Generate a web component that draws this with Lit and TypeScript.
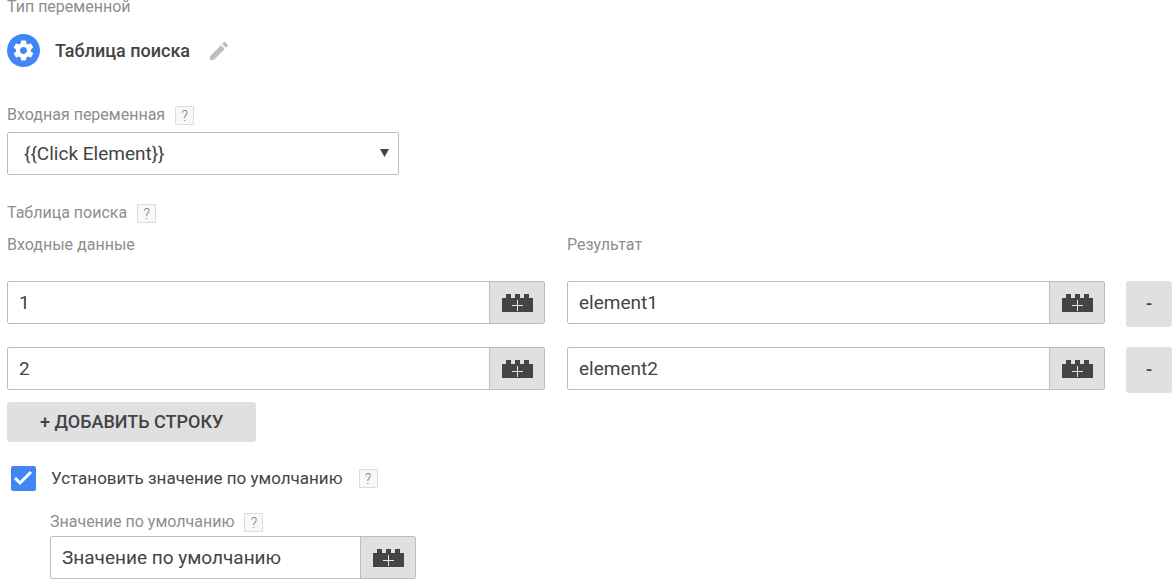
import { LitElement, html, css, svg } from "lit";
import { customElement, property, state } from "lit/decorators.js";

const brick = svg`
  <path fill="#444" d="M0 4h4V0h5v4h4V0h5v4h4V0h5v4h4v14H0z"/>
  <path fill="#e8e8e8" d="M10 11h5V6h1v5h5v1h-5v5h-1v-5h-5z"/>`;

@customElement("help-tip")
export class HelpTip extends LitElement {
  static styles = css`
    :host { display: inline-flex; }
    .tip {
      box-sizing: border-box;
      width: 19px;
      height: 19px;
      padding: 0;
      border: 1px solid #dcdcdc;
      border-radius: 1px;
      background: #f8f8f8;
      color: #777;
      font: 300 14px/18px Roboto, sans-serif;
      text-align: center;
    }
  `;
  render() {
    return html`<button class="tip" type="button" aria-label="Справка">?</button>`;
  }
}

@customElement("variable-input")
export class VariableInput extends LitElement {
  static styles = css`
    :host { display: block; min-width: 0; }
    .field {
      box-sizing: border-box;
      display: flex;
      height: 43px;
      border: 1px solid #bdbdbd;
      border-radius: 2px;
      overflow: hidden;
      background: #fff;
    }
    .text {
      flex: 1;
      min-width: 0;
      padding: 0 11px;
      border: 0;
      outline: 0;
      background: none;
      color: #444;
      font: 19px/24px Roboto, sans-serif;
    }
    .pick {
      display: flex;
      align-items: center;
      justify-content: center;
      width: 55px;
      padding: 0;
      border: 0;
      border-left: 1px solid #bdbdbd;
      background: #e0e0e0;
    }
  `;
  @property() value = "";
  @property() label = "";
  render() {
    return html`<div class="field">
      <input class="text" type="text" aria-label=${this.label} .value=${this.value} />
      <button class="pick" type="button" aria-label="Выбрать переменную">
        <svg width="31" height="18" viewBox="0 0 31 18">${brick}</svg>
      </button>
    </div>`;
  }
}

@customElement("app-root")
export class AppRoot extends LitElement {
  static styles = css`
    :host {
      display: block;
      background: #fff;
      color: #444;
      font-family: Roboto, sans-serif;
    }
    .form { padding: 0 4px 0 7px; }
    .caption {
      display: flex;
      align-items: center;
      gap: 10px;
      color: #8e8e8e;
      font-size: 16px;
      line-height: 20px;
    }
    .kind {
      display: flex;
      align-items: center;
      margin: 20px 0 38px;
    }
    .kind-name {
      margin: 0 20px 0 15px;
      font-size: 18px;
      line-height: 24px;
      font-weight: 500;
    }
    .top { line-height: 14px; }
    .edit { display: flex; padding: 0; border: 0; background: none; }
    .select-box {
      position: relative;
      width: 392px;
      max-width: 100%;
      margin: 7px 0 28px;
    }
    .select {
      display: block;
      box-sizing: border-box;
      width: 100%;
      height: 43px;
      padding: 0 32px 0 16px;
      border: 1px solid #bdbdbd;
      border-radius: 2px;
      appearance: none;
      background: #fff;
      color: #444;
      font: 19px/24px Roboto, sans-serif;
    }
    .arrow {
      position: absolute;
      right: 10px;
      top: 17px;
      pointer-events: none;
    }
    .row {
      display: grid;
      grid-template-columns: 1fr 46px;
      gap: 21px;
      align-items: start;
    }
    .pair {
      display: grid;
      grid-template-columns: 1fr 1fr;
      gap: 22px;
    }
    .heads { margin: 12px 0 26px; }
    .rows { display: grid; gap: 20px; }
    .remove, .add {
      border: 0;
      border-radius: 3px;
      background: #e0e0e0;
      color: #444;
      font: 500 18px/24px Roboto, sans-serif;
    }
    .remove { height: 46px; padding: 0; }
    .add { display: block; height: 40px; margin: 9px 0 23px; padding: 0 33px; }
    .default {
      display: flex;
      align-items: center;
      gap: 16px;
      padding-left: 4px;
    }
    .default-label {
      display: flex;
      align-items: center;
      gap: 15px;
      font-size: 17px;
      line-height: 26px;
    }
    .check { display: grid; }
    .box {
      grid-area: 1 / 1;
      width: 25px;
      height: 25px;
      margin: 0;
      appearance: none;
      border: 2px solid #757575;
      border-radius: 2px;
    }
    .box:checked { border: 0; background: #4285f4; }
    .tick { grid-area: 1 / 1; pointer-events: none; }
    .box:not(:checked) + .tick { visibility: hidden; }
    .fallback { padding: 21px 0 5px 43px; }
    .fallback-input { width: 366px; max-width: 100%; margin-top: 4px; }
  `;

  @state() private rows = [
    { input: "1", output: "element1" },
    { input: "2", output: "element2" },
  ];

  private add() {
    this.rows = [...this.rows, { input: "", output: "" }];
  }
  private remove(i: number) {
    this.rows = this.rows.filter((_, n) => n !== i);
  }

  render() {
    return html`<main class="form">
      <div class="caption top">Тип переменной</div>
      <div class="kind">
        <svg width="33" height="33" viewBox="0 0 33 33" aria-hidden="true">
          <circle cx="16.5" cy="16.5" r="16.5" fill="#4285f4" />
          <path transform="translate(4.5 4.5)" fill="#fff" d="M19.43 12.98c.04-.32.07-.64.07-.98s-.03-.66-.07-.98l2.11-1.65c.19-.15.24-.42.12-.64l-2-3.46c-.12-.22-.39-.3-.61-.22l-2.49 1c-.52-.4-1.08-.73-1.69-.98l-.38-2.65C14.46 2.18 14.25 2 14 2h-4c-.25 0-.46.18-.49.42l-.38 2.65c-.61.25-1.17.59-1.69.98l-2.49-1c-.23-.09-.49 0-.61.22l-2 3.46c-.13.22-.07.49.12.64l2.11 1.65c-.04.32-.07.65-.07.98s.03.66.07.98l-2.11 1.65c-.19.15-.24.42-.12.64l2 3.46c.12.22.39.3.61.22l2.49-1c.52.4 1.08.73 1.69.98l.38 2.65c.03.24.24.42.49.42h4c.25 0 .46-.18.49-.42l.38-2.65c.61-.25 1.17-.59 1.69-.98l2.49 1c.23.09.49 0 .61-.22l2-3.46c.12-.22.07-.49-.12-.64l-2.11-1.65zM12 15.5c-1.93 0-3.500-1.570-3.500-3.500s1.570-3.500 3.500-3.500 3.500 1.570 3.500 3.500-1.570 3.500-3.500 3.500z" />
        </svg>
        <span class="kind-name">Таблица поиска</span>
        <button class="edit" type="button" aria-label="Изменить">
          <svg width="18" height="18" viewBox="3 3 18 18">
            <path fill="#bdbdbd" d="M3 17.250V21h3.750L17.810 9.940l-3.750-3.750L3 17.250zM20.710 7.040c.39-.39.39-1.020 0-1.410l-2.340-2.340c-.39-.39-1.020-.39-1.410 0l-1.830 1.830 3.750 3.750 1.830-1.830z" />
          </svg>
        </button>
      </div>

      <div class="caption">
        <label for="source">Входная переменная</label><help-tip></help-tip>
      </div>
      <div class="select-box">
        <select class="select" id="source"><option>{{Click Element}}</option></select>
        <svg class="arrow" width="9" height="8" viewBox="0 0 9 8"><path fill="#444" d="M0 0h9L4.500 8z" /></svg>
      </div>

      <div class="caption"><span>Таблица поиска</span><help-tip></help-tip></div>
      <div class="row heads">
        <div class="pair">
          <div class="caption">Входные данные</div>
          <div class="caption">Результат</div>
        </div>
      </div>
      <div class="rows">
        ${this.rows.map(
          (r, i) => html`<div class="row">
            <div class="pair">
              <variable-input label="Входные данные" .value=${r.input}></variable-input>
              <variable-input label="Результат" .value=${r.output}></variable-input>
            </div>
            <button class="remove" type="button" aria-label="Удалить строку" @click=${() => this.remove(i)}>-</button>
          </div>`
        )}
      </div>
      <button class="add" type="button" @click=${this.add}>+ ДОБАВИТЬ СТРОКУ</button>

      <div class="default">
        <label class="default-label">
          <span class="check">
            <input class="box" type="checkbox" checked />
            <svg class="tick" width="25" height="25" viewBox="0 0 25 25"><path d="M4 12l5 5L20 6" fill="none" stroke="#fff" stroke-width="3" /></svg>
          </span>
          Установить значение по умолчанию
        </label>
        <help-tip></help-tip>
      </div>
      <div class="fallback">
        <div class="caption"><span>Значение по умолчанию</span><help-tip></help-tip></div>
        <variable-input class="fallback-input" label="Значение по умолчанию" value="Значение по умолчанию"></variable-input>
      </div>
    </main>`;
  }
}
